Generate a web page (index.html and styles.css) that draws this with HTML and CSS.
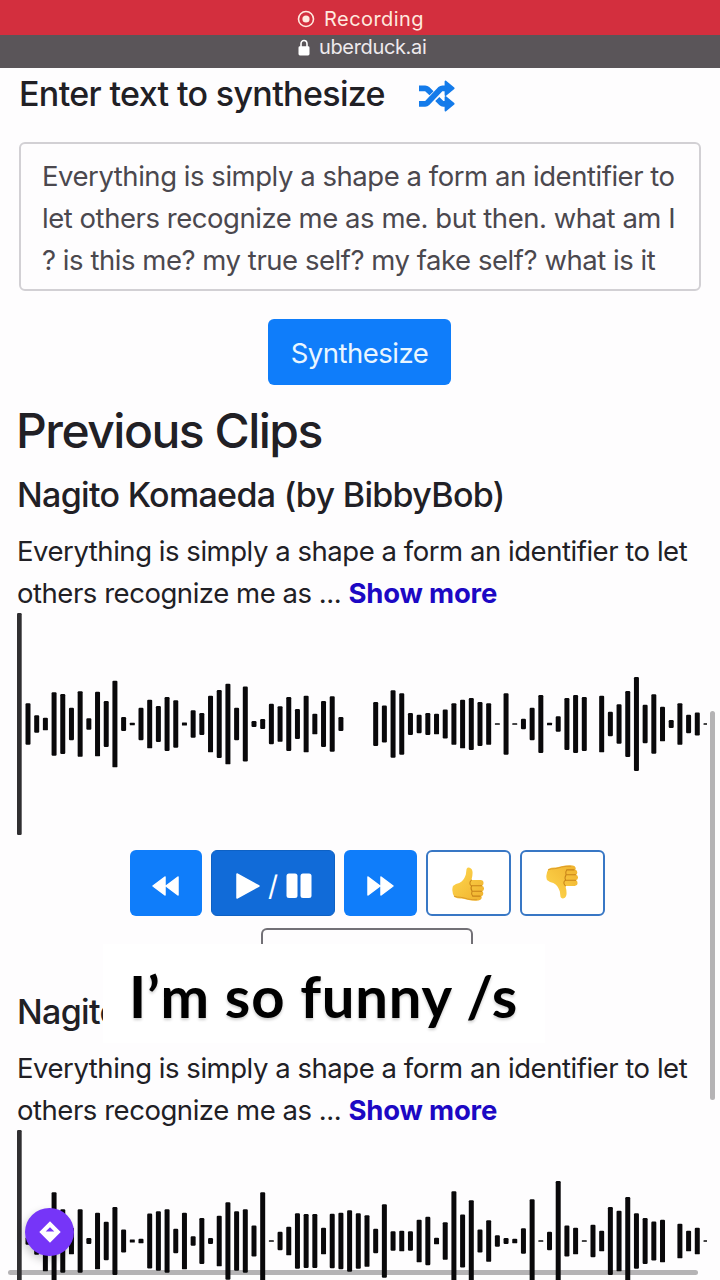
FILE: index.html
```html
<!DOCTYPE html>
<html lang="en">
<head>
<meta charset="utf-8">
<title>uberduck.ai</title>
<link rel="stylesheet" href="styles.css">
</head>
<body>
<div class="screen">
  <header class="recording">
    <svg class="rec-icon" viewBox="0 0 18 18"><circle cx="9" cy="9" r="7.5" fill="none" stroke="currentColor" stroke-width="1.6"/><circle cx="9" cy="9" r="3.6" fill="currentColor"/></svg>
    <span class="rec-text">Recording</span>
  </header>
  <div class="address">
    <svg class="lock-icon" viewBox="0 0 12 17"><path d="M3 8V5a3 3.5 0 0 1 6 0v3" fill="none" stroke="currentColor" stroke-width="1.6"/><rect x=".5" y="7.3" width="11" height="9.2" rx="1.4" fill="currentColor"/></svg>
    <span class="host">uberduck.ai</span>
  </div>
  <main class="content">
    <div class="prompt-head">
      <h2 class="label"><span class="label-text">Enter text to synthesize</span></h2>
      <svg class="shuffle" viewBox="0 0 36 32" fill="none" stroke="currentColor" stroke-width="5.8"><path d="M0 8.3h6.2q1.2 0 2 .8l4.300 4.200M0 23.800h6.200q1.200 0 2-.8L21.500 9.100q.8-.8 2-.8h4M18.300 19l4 4q.8.8 2 .8h4"/><path d="M26.500 1.500v13.600l8.200-6.800zM26.500 17v13.600l8.200-6.800z" fill="currentColor" stroke-width="1.800" stroke-linejoin="round"/></svg>
    </div>
    <div class="textbox">
      <div class="line">Everything is simply a shape a form an identifier to</div>
      <div class="line">let others recognize me as me. but then. what am I</div>
      <div class="line">? is this me? my true self? my fake self? what is it</div>
    </div>
    <button class="btn synth"><span>Synthesize</span></button>
    <h1 class="clips">Previous Clips</h1>
    <section class="clip first">
      <h3 class="voice">Nagito Komaeda (by BibbyBob)</h3>
      <p class="quote"><span>Everything is simply a shape a form an identifier to let</span><br><span>others recognize me as ...</span> <a class="more">Show more</a></p>
      <svg class="wave" viewBox="0 0 690 222" data-levels="124 52 38 190 180 97 197 34 194 138 260 42 7 97 146 108 162 142 9 82 66 170 204 242 97 225 18 30 121 107 162 90 170 62 138 166 42 0 0 0 132 111 202 184 66 55 66 62 87 125 146 156 132 125 4 184 4 31 97 174 7 46 156 174 162 0 170 73 118 198 282 115 178 104 24 125 55 69 4"></svg>
      <div class="controls">
        <button class="btn seek"><svg class="seek-icon" viewBox="0 0 28 22"><path d="M13.500 2v18L1.500 11zM26.500 2v18L14.500 11z"/></svg></button>
        <button class="btn play">
          <svg class="play-icon" viewBox="0 0 26 28"><path d="M2 2v24l22-12z"/></svg><span class="slash">/</span><svg class="pause-icon" viewBox="0 0 26 26"><rect x="0.500" y=".5" width="11" height="24.500" rx="2.500"/><rect x="14.500" y=".5" width="11" height="24.500" rx="2.500"/></svg>
        </button>
        <button class="btn seek"><svg class="seek-icon flip" viewBox="0 0 28 22"><path d="M13.500 2v18L1.500 11zM26.500 2v18L14.500 11z"/></svg></button>
        <button class="btn vote"><svg class="thumb" viewBox="0 0 34 36"><use href="#thumb"/></svg></button>
        <button class="btn vote"><svg class="thumb down" viewBox="0 0 34 36"><use href="#thumb"/></svg></button>
      </div>
      <div class="tray"></div>
    </section>
    <section class="clip second">
      <h3 class="voice">Nagito</h3>
      <p class="quote"><span>Everything is simply a shape a form an identifier to let</span><br><span>others recognize me as ...</span> <a class="more">Show more</a></p>
      <svg class="wave" viewBox="0 0 690 222" data-levels="22 82 182 292 190 80 190 18 170 115 204 69 9 14 165 178 190 73 170 28 138 18 152 232 178 190 93 292 4 55 86 166 162 162 80 163 169 184 166 155 73 220 58 62 58 128 145 20 113 298 159 245 69 125 34 18 14 76 250 4 55 360 93 80 4 97 62 204 182 264 166 138 117 128 0 104 62 80 4"></svg>
    </section>
  </main>
  <div class="caption"><span>I’m so funny /s</span></div>
  <div class="scroll-y"></div>
  <div class="scroll-x"></div>
  <div class="badge"><svg class="badge-icon" viewBox="0 0 22 22"><path fill="#fff" fill-rule="evenodd" d="M11 .3 21.700 11 11 21.700.3 11zM11 6.200 6.700 10.400h8.600z"/></svg></div>
</div>
<svg class="defs" width="0" height="0">
  <defs>
    <linearGradient id="skin" x1="0" y1="0" x2="1" y2="1"><stop offset="0" stop-color="#ffd84f"/><stop offset="1" stop-color="#efb12d"/></linearGradient>
    <g id="thumb">
      <path fill="url(#skin)" d="M1 20q3-2.500 6.500-3 4.500-2 6.700-8.500L15 2.500Q16 .5 18.200 1.200q3 1.200 3 5.300 0 3.500-1.200 7.500h9.500q3 .3 3 3 0 2-1.500 2.700 2 .8 2 3 0 2.200-1.800 2.800 1.200.8 1 2.700-.2 2-2 2.300.7 1 .2 2.500-.7 1.800-3 2-6 .5-11.400-.8-3.500-1-6-1.300-4 .3-7.200-1.200Q-1 26 1 20z"/>
      <path fill="none" stroke="#c78319" stroke-width="1.100" stroke-linecap="round" d="M20 14q-2 1.500-1.500 4 .3 1.500 2 1.800M20.500 19.800h10M20.300 19.800q-1.500 2.500.3 5.500M20.600 25.400h9.800M20.600 25.400q-1 2.700.7 5M21.300 30.500h7.700"/>
      <path fill="none" stroke="#db9928" stroke-width="1" d="M2 30.500q3.500 1.300 7 1.200 3.500.5 7 1.700 4.500 1 10 .8"/>
    </g>
  </defs>
</svg>
<script src="script.js"></script>
</body>
</html>
```
FILE: styles.css
```css
* { box-sizing: border-box; }
body { margin: 0; background: #fefdfe; font-family: Inter, "Liberation Sans", sans-serif; color: #212025; }
h1, h2, h3, p { margin: 0; font-weight: 500; }
.screen { position: relative; width: 720px; height: 1280px; overflow: hidden; }
.defs { position: absolute; }
.recording { height: 35px; background: #d32f3e; color: #ffe9df; display: flex; align-items: center; padding: 2px 0 0 297px; gap: 9px; }
.rec-icon { width: 18px; height: 18px; flex: none; }
.rec-text { font-size: 20px; letter-spacing: .45px; }
.address { height: 33px; background: #5a5559; color: #fff; display: flex; align-items: flex-start; padding: 0 0 0 298px; gap: 9px; }
.lock-icon { width: 12px; height: 17px; margin-top: 4px; }
.host { font-size: 20px; line-height: 24px; letter-spacing: -.35px; color: #eeeaed; }
.content { padding: 0 16px; height: 1212px; }
.prompt-head { display: flex; height: 74px; padding-left: 3px; }
.label { width: 400px; font-size: 34px; line-height: 51px; white-space: nowrap; letter-spacing: -.65px; }
.shuffle { width: 36px; height: 32px; margin-top: 12px; color: #147bea; }
.textbox { height: 149px; width: 682px; margin-left: 3px; border: 2px solid #d2d0d4; border-radius: 6px; padding: 11px 20px 11px 21px; color: #4b484e; font-size: 27.5px; }
.line { height: 42px; line-height: 42px; white-space: nowrap; letter-spacing: -.46px; }
.btn { border: 0; border-radius: 6px; background: #0f7dfa; color: #fff; font: 28px Inter, sans-serif; display: flex; align-items: center; justify-content: center; padding: 0; }
.synth { width: 183px; height: 66px; margin: 28px 0 0 252px; color: #e9f6ff; font-size: 27.5px; letter-spacing: -.5px; padding-top: 2px; }
.clips { margin-top: 18px; font-size: 48px; line-height: 56px; letter-spacing: -1.5px; }
.clip { height: 517px; padding-left: 1px; }
.voice { font-size: 34px; line-height: 42px; padding-top: 15px; height: 71px; letter-spacing: -.68px; }
.quote { font-size: 27.5px; line-height: 42px; font-weight: 400; height: 83px; white-space: nowrap; letter-spacing: -.46px; }
.more { color: #1c08c4; font-weight: 700; letter-spacing: -.2px; }
.wave { display: block; position: relative; z-index: 2; width: 690px; height: 222px; }
.controls { display: flex; gap: 9px; padding: 15px 0 0 112.5px; }
.controls .btn { height: 66px; }
.controls .seek { width: 72.5px; }
.controls .play { width: 124px; background: #116bd8; border: 1px solid #0e61c4; padding-top: 5px; }
.controls .vote { width: 85px; background: #fff; border: 2px solid #3877c5; }
.btn svg { fill: #fff; stroke: #fff; stroke-linejoin: round; stroke-width: 1.5; flex: none; }
.seek-icon { width: 29px; height: 22px; margin-top: 5px; }
.flip { transform: scaleX(-1); }
.play-icon { width: 26px; height: 28px; }
.slash { width: 25px; text-align: center; font-size: 28px; }
.btn .pause-icon { width: 26px; height: 26px; stroke: none; }
.btn .thumb { width: 33px; height: 36px; stroke: none; margin-top: 2px; }
.down { transform: rotate(180deg) scaleX(-1); }
.controls .vote .down { margin-top: 0; margin-bottom: 2px; }
.tray { width: 212px; height: 30px; margin: 12px 0 0 244px; border: 2px solid #727076; border-bottom: 0; border-radius: 6px 6px 0 0; }
.caption { position: absolute; left: 103px; top: 944px; width: 442px; height: 99px; background: #fff; padding-left: 26px; color: #000; font: 700 58px/104px Lato, sans-serif; letter-spacing: .8px; white-space: nowrap; text-shadow: 0 2px 3px #0003; }
.scroll-y { position: absolute; left: 710px; top: 711px; width: 5px; height: 389px; border-radius: 3px; background: #b5b3b5; }
.scroll-x { position: absolute; left: 8px; top: 1270px; width: 690px; height: 5px; border-radius: 3px; background: #b5b3b5; z-index: 1; }
.badge { position: absolute; z-index: 3; left: 25px; top: 1208px; width: 49px; height: 48px; border-radius: 50%; background: #7635f8; display: flex; align-items: center; justify-content: center; box-shadow: -2px 4px 8px #0003; }
.badge-icon { width: 22px; height: 22px; }
```
FILE: script.js
```js
const NS = 'http://www.w3.org/2000/svg';
function bar(svg, x, y, w, h, fill) {
  const r = document.createElementNS(NS, 'rect');
  const attrs = { x, y, width: w, height: h, fill, rx: h > 3 ? 1.2 : 0.5 };
  for (const k in attrs) r.setAttribute(k, attrs[k]);
  svg.appendChild(r);
}
document.querySelectorAll('.wave').forEach((svg) => {
  bar(svg, 0, 0, 4.7, 222, '#302f31');
  svg.dataset.levels.split(' ').map(Number).forEach((v, i) => {
    if (v) bar(svg, 8.5 + i * 8.692, 111 - v / 6, 5, v / 3, '#09080a');
  });
});
```
